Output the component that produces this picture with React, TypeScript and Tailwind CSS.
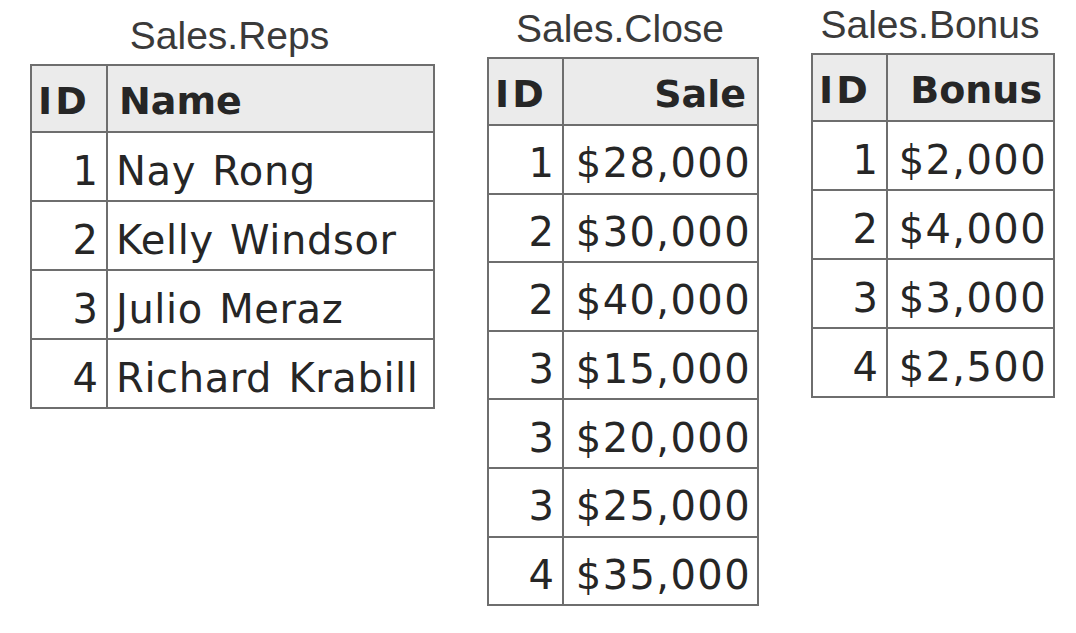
import React from 'react';

type Row = [string, string];

interface SalesTableProps {
  title: string;
  head: string;
  rows: Row[];
  idWidth: string;
  valWidth: string;
  rowH: string;
  valAlign: 'left' | 'right';
  headAlign: 'left' | 'right';
  spaced?: boolean;
  offset: string;
}

const SalesTable: React.FC<SalesTableProps> = ({ title, head, rows, idWidth, valWidth, rowH, valAlign, headAlign, spaced, offset }) => {
  return (
    <div className={`flex flex-col items-center ${offset}`}>
      <div className="font-['Liberation_Sans',Arial,sans-serif] text-[39px] leading-none text-[#3a3a3a] mb-[9px] -translate-x-[3px]">
        {title}
      </div>
      <table className="table-fixed border-collapse border-2 border-[#5e5e5e] font-['DejaVu_Sans',Verdana,sans-serif] text-[40px] text-[#262626]">
        <thead>
          <tr className="bg-[#ebebeb] h-[67px]">
            <th className={`${idWidth} border-2 border-[#6e6e6e] pl-[6px] pr-[2px] pt-[4px] text-left text-[38px] font-bold tracking-[3px] leading-none`}>ID</th>
            <th className={`${valWidth} border-2 border-[#6e6e6e] px-[11px] pt-[4px] text-[38px] font-bold leading-none ${headAlign === 'right' ? 'text-right' : 'text-left'}`}>
              {head}
            </th>
          </tr>
        </thead>
        <tbody>
          {rows.map(([id, val], i) => (
            <tr key={i} className={rowH}>
              <td className="border-2 border-[#6e6e6e] pr-[8px] pt-[8px] text-right leading-none">{id}</td>
              <td className={`border-2 border-[#6e6e6e] pl-[8px] pr-[6px] pt-[8px] leading-none whitespace-nowrap ${valAlign === 'right' ? 'text-right' : 'text-left'} ${spaced ? 'tracking-[0.6px] [word-spacing:3px]' : 'tracking-[1.4px]'}`}>
                {val}
              </td>
            </tr>
          ))}
        </tbody>
      </table>
    </div>
  );
};

export default function App() {
  return (
    <div className="w-[1076px] h-[633px] bg-white overflow-hidden flex items-start pl-[30px] gap-[52px]">
      <SalesTable
        title="Sales.Reps"
        head="Name"
        idWidth="w-[76px]"
        valWidth="w-[327px]"
        rowH="h-[69px]"
        valAlign="left"
        headAlign="left"
        spaced
        offset="mt-[16px]"
        rows={[
          ['1', 'Nay Rong'],
          ['2', 'Kelly Windsor'],
          ['3', 'Julio Meraz'],
          ['4', 'Richard Krabill'],
        ]}
      />
      <SalesTable
        title="Sales.Close"
        head="Sale"
        idWidth="w-[75px]"
        valWidth="w-[195px]"
        rowH="h-[68.6px]"
        valAlign="right"
        headAlign="right"
        offset="mt-[9px]"
        rows={[
          ['1', '$28,000'],
          ['2', '$30,000'],
          ['2', '$40,000'],
          ['3', '$15,000'],
          ['3', '$20,000'],
          ['3', '$25,000'],
          ['4', '$35,000'],
        ]}
      />
      <SalesTable
        title="Sales.Bonus"
        head="Bonus"
        idWidth="w-[75px]"
        valWidth="w-[167px]"
        rowH="h-[69px]"
        valAlign="right"
        headAlign="right"
        offset="mt-[5px]"
        rows={[
          ['1', '$2,000'],
          ['2', '$4,000'],
          ['3', '$3,000'],
          ['4', '$2,500'],
        ]}
      />
    </div>
  );
}
